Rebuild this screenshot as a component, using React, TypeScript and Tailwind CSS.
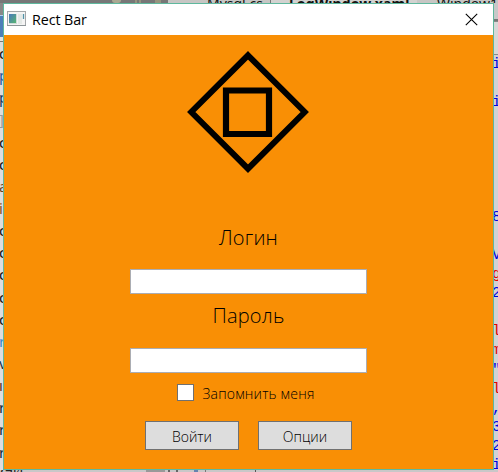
type Glyph = { t: string; c: string };

const leftRows: Glyph[] = [
  { t: "c", c: "text-[#111]" },
  { t: "p", c: "text-[#2558a0]" },
  { t: "p", c: "text-[#183a60]" },
  { t: "]", c: "text-[#999]" },
  { t: "c", c: "text-[#111]" },
  { t: "c", c: "text-[#111]" },
  { t: "a", c: "text-[#6b4420]" },
  { t: "i", c: "text-[#8a5020]" },
  { t: "c", c: "text-[#111]" },
  { t: "c", c: "text-[#111]" },
  { t: "c", c: "text-[#111]" },
  { t: "c", c: "text-[#111]" },
  { t: "c", c: "text-[#111]" },
  { t: "r", c: "text-[#3888d0]" },
  { t: "v", c: "text-[#18304a]" },
  { t: "ı", c: "text-[#603018]" },
  { t: "r", c: "text-[#182838]" },
  { t: "r", c: "text-[#182838]" },
  { t: "r", c: "text-[#182838]" },
];

const rightRows: Glyph[] = [
  { t: "i", c: "text-[#0000e0]" },
  { t: "", c: "" },
  { t: "i", c: "text-[#0000e0]" },
  { t: "", c: "" },
  { t: "", c: "" },
  { t: "", c: "" },
  { t: "", c: "" },
  { t: "", c: "" },
  { t: "8", c: "text-[#0000e0]" },
  { t: "", c: "" },
  { t: "V", c: "text-[#0000e0]" },
  { t: "g", c: "text-[#e00000] underline" },
  { t: "2", c: "text-[#0000e0]" },
  { t: "", c: "" },
  { t: "l", c: "text-[#e00000]" },
  { t: "m", c: "text-[#e00000]" },
  { t: "\"", c: "text-[#0000e0]" },
  { t: "l", c: "text-[#e00000]" },
  { t: ",", c: "text-[#0000e0]" },
  { t: "3", c: "text-[#0000e0]" },
  { t: "2", c: "text-[#0000e0]" },
  { t: "i", c: "text-[#0000e0]" },
];

function Editor() {
  return (
    <div className="flex h-full flex-col bg-[#d2d2d4]">
      <div className="flex h-[3px] shrink-0 overflow-hidden bg-[#777] font-['Noto_Sans'] text-[14px] leading-[8px] text-[#111]">
        <div className="flex w-[168px] justify-end gap-[14px] pr-[7px]">
          <i className="h-[3px] w-[9px] rounded-b-full bg-[#aaa992]" />
          <i className="h-[3px] w-[6px] border-x-2 border-[#96957f]" />
          <i className="h-[3px] w-[6px] bg-[#96957f]" />
        </div>
        <div className="w-[102px] bg-[#c7c6c4] pl-[39px]">Mysql.cs</div>
        <div className="w-[147px] border-l border-[#777] bg-[#d3d2d0] pl-[18px] font-bold tracking-[0.1px]">LogWindow.xaml</div>
        <div className="flex-1 bg-[#c7c6c4] pl-[20px] whitespace-nowrap">Window1</div>
      </div>
      <div className="flex min-h-0 flex-1 justify-between">
        <div className="flex w-[3px] flex-col overflow-hidden bg-[#dcdde0] font-['Noto_Sans'] text-[15px] leading-[22px]">
          <div className="h-[12px] shrink-0 bg-[#888]" />
          <div className="h-[22px] shrink-0 border-t border-[#b0d0f0] bg-[#4d7fb9]" />
          <div className="h-[5px] shrink-0 border-b border-[#777] bg-[#e5e5e5]" />
          {leftRows.map((g, i) => (
            <div key={i} className={`h-[22.15px] shrink-0 ${g.c}`}>
              <span className="-ml-px">{g.t}</span>
            </div>
          ))}
        </div>
        <div className="flex w-[4px] flex-col overflow-hidden font-['Liberation_Mono'] text-[15px] leading-[19px]">
          <div className="h-[16px] shrink-0 bg-[#c8c8c8]" />
          <div className="h-[2px] shrink-0 bg-[#777]" />
          <div className="h-[34px] shrink-0 border-y border-[#888] bg-[#d8d8d8]" />
          {rightRows.map((g, i) => (
            <div key={i} className={`h-[19.1px] shrink-0 ${g.c}`}>
              <span className="-ml-[2px]">{g.t}</span>
            </div>
          ))}
        </div>
      </div>
      <div className="flex h-[2px] shrink-0 overflow-hidden bg-[#c9c7c8]">
        <div className="w-[33px] overflow-hidden font-['Noto_Sans'] text-[14px] leading-[2px] text-[#222]">.ЭИ С.</div>
        <i className="ml-[113px] h-full w-[19px] bg-[#999]" />
        <i className="ml-[3px] h-full w-[10px] border-x-2 border-[#666]" />
        <i className="ml-[16px] h-full w-[4px] bg-[#6683b0]" />
        <i className="ml-[7px] h-full w-px bg-[#777]" />
        <i className="ml-[49px] h-full w-px bg-[#555]" />
      </div>
    </div>
  );
}

function TitleBar() {
  return (
    <div className="flex h-[31px] shrink-0 items-center bg-white pr-[15px] pl-[3px]">
      <svg className="-mt-px" width="20" height="16" viewBox="0 0 20 16">
        <defs>
          <linearGradient id="pane" x1="0" y1="0" x2="1" y2="1">
            <stop offset="0" stopColor="#4a78bd" />
            <stop offset="1" stopColor="#57b571" />
          </linearGradient>
        </defs>
        <rect x=".5" y=".5" width="18" height="14" fill="#f4f4f4" stroke="#a5a8aa" />
        <path d="M0 14.5h19" stroke="#8d9598" />
        <rect x="2" y="3" width="8" height="10" fill="#cfdcd8" />
        <rect x="2" y="3" width="7" height="9" fill="url(#pane)" />
        <path d="M11 3h4v10h-4z" fill="#e4e9e6" />
        <path d="M16.5 3v5" stroke="#5393a6" strokeWidth="1.3" />
      </svg>
      <span className="ml-[5px] text-[14.3px] tracking-[-0.1px] text-black">Rect Bar</span>
      <svg className="ml-auto" width="13" height="13" viewBox="0 0 13 13">
        <path d="M.8.8 12.2 12.2M12.2.8.8 12.2" stroke="#000" strokeWidth="1.1" />
      </svg>
    </div>
  );
}

export default function App() {
  return (
    <div className="relative h-[472px] w-[498px] overflow-hidden">
      <Editor />
      <main className="absolute top-[3px] left-[3px] flex h-[467px] w-[491px] flex-col border border-[#5eb89d] bg-[#f98f05] font-['Open_Sans','Noto_Sans',sans-serif]">
        <TitleBar />
        <div className="flex flex-1 flex-col items-center text-black">
          <svg className="mt-[15px] mr-[2px] shrink-0" width="124" height="124" viewBox="0 0 124 124">
            <path d="M62 5.3 118.7 62 62 118.7 5.3 62Z" fill="none" stroke="#000" strokeWidth="6" />
            <path d="M40 40.5H83V84H40Z" fill="none" stroke="#000" strokeWidth="6.2" />
          </svg>
          <label htmlFor="login" className="mt-[49px] h-[30px] text-[20px] leading-[30px] font-[350] tracking-[0.2px]">Логин</label>
          <input id="login" className="mt-[16px] h-[25px] w-[237px] shrink-0 border border-[#abadb3] bg-white outline-none" />
          <label htmlFor="password" className="mt-[7px] h-[30px] text-[20px] leading-[30px] font-[350] tracking-[0.2px]">Пароль</label>
          <input id="password" type="password" className="mt-[17px] h-[25px] w-[237px] shrink-0 border border-[#abadb3] bg-white outline-none" />
          <label className="mt-[11px] mr-[5px] flex h-[17px] items-center gap-[8px] text-[14px] font-[350]">
            <input type="checkbox" className="h-[17px] w-[17px] appearance-none border border-[#707070] bg-white" />
            <span className="pt-[2px] tracking-[0.2px]">Запомнить меня</span>
          </label>
          <div className="mt-[20px] flex gap-[19px] text-[14px] font-[350]">
            <button className="h-[29px] w-[94px] border border-[#707070] bg-[#ddd] pt-px">Войти</button>
            <button className="h-[29px] w-[94px] border border-[#707070] bg-[#ddd] pt-px">Опции</button>
          </div>
        </div>
      </main>
    </div>
  );
}
